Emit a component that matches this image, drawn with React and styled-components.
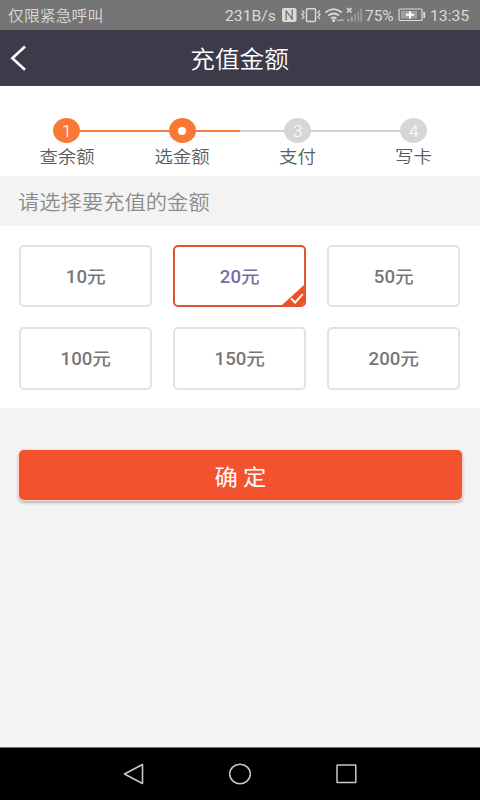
import React, { useState } from "react";
import styled, { createGlobalStyle, css } from "styled-components";

const GlobalStyle = createGlobalStyle`
  * { box-sizing: border-box; }
  body { margin: 0; background: #f4f4f4; }
  button { font: inherit; padding: 0; margin: 0; border: 0; background: none; }
`;

const Screen = styled.div`
  display: flex;
  flex-direction: column;
  width: 480px;
  height: 800px;
  overflow: hidden;
  background: #f4f4f4;
  font-family: Roboto, "Noto Sans CJK SC", sans-serif;
`;

const Wide = styled.span`
  display: inline-block;
  white-space: nowrap;
  transform: scaleX(${(p) => p.$x || 1.06});
  transform-origin: ${(p) => p.$origin || "center"};
`;

const StatusBar = styled.div`
  display: flex;
  align-items: center;
  height: 30px;
  padding: 1px 10px 1px 8px;
  background: #757575;
  color: #dadada;
  font-size: 15px;
  line-height: 28px;
`;

const Carrier = styled.div`
  flex: 1;
  font-weight: 350;
  font-family: "Noto Sans CJK SC", sans-serif;
`;

const StatusText = styled.span`
  width: ${(p) => p.$w}px;
  padding-top: 1px;
  white-space: nowrap;
`;

const StatusIcons = styled.svg`
  display: block;
  flex: none;
`;

const Header = styled.header`
  display: grid;
  grid-template-columns: 60px 1fr 60px;
  align-items: center;
  height: 56px;
  background: #3d3b4a;
  border-bottom: 1px solid #464254;
  color: #fff;
`;

const Back = styled.button`
  display: flex;
  padding-left: 8px;
`;

const Title = styled.h1`
  margin: 0 0 0 -1px;
  text-align: center;
  font: 350 23.3px/50px "Noto Sans CJK SC", sans-serif;
`;

const Steps = styled.div`
  display: grid;
  grid-template-columns: repeat(4, 115.5px);
  justify-content: center;
  height: 90px;
  padding-top: 32px;
  background: #fff;
`;

const Step = styled.div`
  display: flex;
  flex-direction: column;
  align-items: center;
`;

const Track = styled.div`
  display: flex;
  align-items: center;
  width: 100%;
  height: 25px;
`;

const Rail = styled.div`
  flex: 1;
  height: 2px;
  background: ${(p) => p.$color};
`;

const Bullet = styled.div`
  display: flex;
  align-items: center;
  justify-content: center;
  width: 27px;
  height: 25px;
  border-radius: 50%;
  background: ${(p) => (p.$on ? "#fa7836" : "#d6d6d6")};
  color: #fff;
  font: 300 17px/27px Roboto, sans-serif;
`;

const Digit = styled(Wide)`
  padding-top: 2px;
`;

const Dot = styled.span`
  width: 8px;
  height: 8px;
  border-radius: 50%;
  background: #fff;
`;

const StepLabel = styled.div`
  color: #5c5c5c;
  font: 350 17.4px/25px "Noto Sans CJK SC", sans-serif;
`;

const Prompt = styled.div`
  height: 50px;
  padding-left: 18px;
  background: #f3f3f3;
  color: #8b8b8b;
  font: 350 20.1px/52px "Noto Sans CJK SC", sans-serif;
`;

const Amounts = styled.div`
  display: grid;
  grid-template-columns: repeat(3, 133px);
  grid-template-rows: 62.5px 62.5px;
  justify-content: space-between;
  row-gap: 20px;
  height: 182px;
  padding: 18.5px 20px 0 19px;
  background: #fff;
`;

const Amount = styled.button`
  position: relative;
  padding-bottom: 1px;
  border: 2px solid #e2e2e2;
  border-radius: 5px;
  color: #777;
  font-size: 17.6px;
  font-weight: 500;
  overflow: hidden;
  ${(p) =>
    p.$selected &&
    css`
      border-color: #dc5630;
      color: #756ea6;
    `}
`;

const Tick = styled.svg`
  position: absolute;
  right: -1px;
  bottom: -1px;
`;

const Confirm = styled.button`
  height: 50px;
  margin: 42px 18.5px 0 18.5px;
  border-radius: 5px;
  background: #f3522e;
  box-shadow: 0 0 0 1px #f5dcd4, 0 2px 3px 1px rgba(0, 0, 0, 0.25);
  color: #fff;
  font: 400 22px/50px "Noto Sans CJK SC", sans-serif;
`;

const NavBar = styled.nav`
  display: flex;
  align-items: center;
  justify-content: center;
  gap: 80px;
  height: 53px;
  margin-top: auto;
  border-top: 1px solid #777;
  background: #000;
`;

const NavButton = styled.button`
  display: flex;
`;

const steps = ["查余额", "选金额", "支付", "写卡"];
const amounts = [10, 20, 50, 100, 150, 200];
const ORANGE = "#f5793e";
const GREY = "#d2d2d2";

function StepItem({ label, index, current }) {
  const last = steps.length - 1;
  const left = index === 0 ? "transparent" : index <= current ? ORANGE : GREY;
  const right = index === last ? "transparent" : index <= current ? ORANGE : GREY;
  return (
    <Step>
      <Track>
        <Rail $color={left} />
        <Bullet $on={index <= current}>
          {index === current ? <Dot /> : <Digit>{index + 1}</Digit>}
        </Bullet>
        <Rail $color={right} />
      </Track>
      <StepLabel><Wide>{label}</Wide></StepLabel>
    </Step>
  );
}

function StatusGlyphs() {
  return (
    <StatusIcons width="84" height="20" viewBox="281 5 84 20">
      <rect x="282" y="8" width="14.5" height="14" rx="2" fill="#dadada" />
      <path d="M286.2 20.5V10.2M286.2 10.8l6 8.4M292.2 9.5v10.3" fill="none" stroke="#757575" strokeWidth="1.3" />
      <rect x="306.5" y="8.8" width="9" height="12.6" rx="1" fill="none" stroke="#dadada" strokeWidth="1.5" />
      <path d="M302 10.5l2 2-2 2 2 2-2 2.5M320 10.5l-2 2 2 2-2 2 2 2.5" fill="none" stroke="#dadada" strokeWidth="1.3" />
      <path d="M325.5 12.5q8.2-6.8 16.4 0M328.3 15.7q5.4-4.4 10.8 0M331 18.6q2.7-2.2 5.4 0" fill="none" stroke="#dadada" strokeWidth="1.7" />
      <circle cx="333.7" cy="20.5" r="1.5" fill="#dadada" />
      <path d="M337 19.5l1.5 1.8 1.5-1.8M340.5 21l1.5-1.8 1.3 1.8" fill="none" stroke="#dadada" strokeWidth="1" />
      <path d="M347 8l4.5 4.5M351.5 8l-4.5 4.5" stroke="#dadada" strokeWidth="1.5" />
      <path d="M348.2 19v2.5M351.8 17v4.5" stroke="#a8a8a8" strokeWidth="2" />
      <path d="M355.2 14v7.5M358.3 11.5v10M361.2 8.5v13" stroke="#999" strokeWidth="1.8" />
    </StatusIcons>
  );
}

export default function App() {
  const [selected, setSelected] = useState(20);
  return (
    <>
      <GlobalStyle />
      <Screen>
        <StatusBar>
          <Carrier><Wide $origin="left">仅限紧急呼叫</Wide></Carrier>
          <StatusText $w={56}><Wide $origin="left" $x={1.05}>231B/s</Wide></StatusText>
          <StatusGlyphs />
          <StatusText $w={33}><Wide $origin="left" $x={1.03}>75%</Wide></StatusText>
          <StatusIcons width="32" height="20" viewBox="398 5 32 20">
            <rect x="399" y="9" width="23" height="11.5" rx="1" fill="none" stroke="#dadada" strokeWidth="1.2" />
            <rect x="401" y="11" width="16" height="7.5" fill="#a0a0a0" />
            <path d="M406 14.8h8M410 11.2v7.2" stroke="#fff" strokeWidth="2" />
            <path d="M424.2 12v6" stroke="#dadada" strokeWidth="1.8" />
          </StatusIcons>
          <StatusText $w={40}><Wide $origin="left" $x={1.05}>13:35</Wide></StatusText>
        </StatusBar>
        <Header>
          <Back aria-label="返回">
            <svg width="18" height="28" viewBox="0 0 18 28">
              <path d="M17 2.5L4.3 14.2 17 25.8" fill="none" stroke="#fff" strokeWidth="2.6" />
            </svg>
          </Back>
          <Title><Wide>充值金额</Wide></Title>
        </Header>
        <Steps>
          {steps.map((label, i) => (
            <StepItem key={label} label={label} index={i} current={1} />
          ))}
        </Steps>
        <Prompt><Wide $origin="left">请选择要充值的金额</Wide></Prompt>
        <Amounts>
          {amounts.map((value) => (
            <Amount key={value} $selected={value === selected} onClick={() => setSelected(value)}>
              <Wide>{value}元</Wide>
              {value === selected && (
                <Tick width="24" height="22" viewBox="0 0 24 22">
                  <path d="M24 0V22H0Z" fill="#f05020" />
                  <path d="M10 14.5l4.2 4 7.5-8.3" fill="none" stroke="#fff" strokeWidth="2" />
                </Tick>
              )}
            </Amount>
          ))}
        </Amounts>
        <Confirm><Wide>确 定</Wide></Confirm>
        <NavBar>
          <NavButton aria-label="后退">
            <svg width="26" height="24" viewBox="0 0 26 24">
              <path d="M21.5 2.5v19L3.5 12Z" fill="none" stroke="#c8c8c8" strokeWidth="1.6" strokeLinejoin="round" />
            </svg>
          </NavButton>
          <NavButton aria-label="主页">
            <svg width="26" height="24" viewBox="0 0 26 24">
              <ellipse cx="13" cy="12" rx="10.3" ry="9.7" fill="none" stroke="#c8c8c8" strokeWidth="1.5" />
            </svg>
          </NavButton>
          <NavButton aria-label="最近任务">
            <svg width="26" height="24" viewBox="0 0 26 24">
              <rect x="4" y="3" width="18.8" height="17.5" rx="0.5" fill="none" stroke="#c8c8c8" strokeWidth="1.5" />
            </svg>
          </NavButton>
        </NavBar>
      </Screen>
    </>
  );
}
